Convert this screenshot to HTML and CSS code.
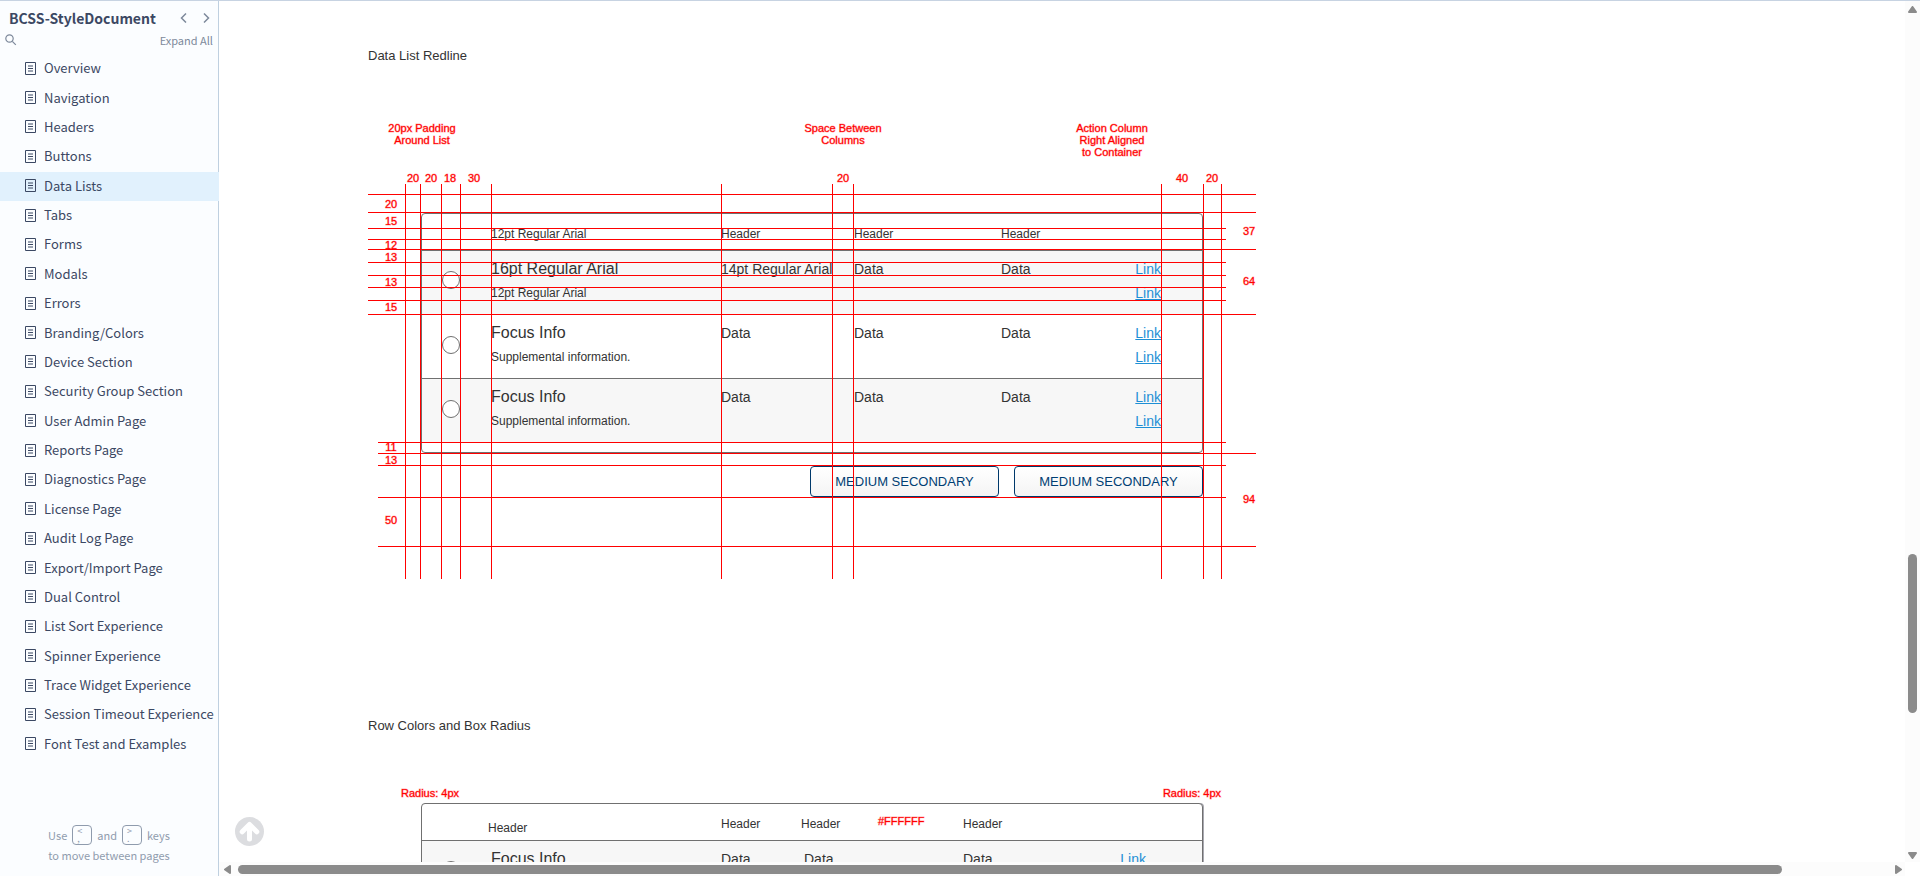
FILE: index.html
```html
<!DOCTYPE html>
<html lang="en">
<head>
<meta charset="utf-8">
<title>BCSS-StyleDocument</title>
<link rel="stylesheet" href="styles.css">
</head>
<body>
<svg class="defs" aria-hidden="true">
  <symbol id="page-icon" viewBox="0 0 12 13"><path d="M.5.5h10v12H.5z" fill="none" stroke="currentColor"/><path d="M3 4h5M3 6.5h5M3 9h5" stroke="currentColor"/></symbol>
</svg>
<div class="app">
  <aside class="sidebar">
    <header class="project">
      <h1 class="project-name">BCSS-StyleDocument</h1>
      <button class="icon-button" aria-label="Previous page"><svg width="8" height="10" viewBox="0 0 8 10"><path d="M6 .5 1.500 5 6 9.500"/></svg></button>
      <button class="icon-button" aria-label="Next page"><svg width="8" height="10" viewBox="0 0 8 10"><path d="M2 .5 6.500 5 2 9.500"/></svg></button>
    </header>
    <div class="tools">
      <button class="icon-button" aria-label="Search"><svg class="search" width="12" height="12" viewBox="0 0 12 12"><circle cx="4.500" cy="4.500" r="3.700"/><path d="m7.300 7.300 3.500 3.500"/></svg></button>
      <button class="expand">Expand All</button>
    </div>
    <nav>
      <ul class="pages">
        <li><a href="#"><svg class="page-icon"><use href="#page-icon"/></svg>Overview</a></li>
        <li><a href="#"><svg class="page-icon"><use href="#page-icon"/></svg>Navigation</a></li>
        <li><a href="#"><svg class="page-icon"><use href="#page-icon"/></svg>Headers</a></li>
        <li><a href="#"><svg class="page-icon"><use href="#page-icon"/></svg>Buttons</a></li>
        <li><a href="#" class="current" aria-current="page"><svg class="page-icon"><use href="#page-icon"/></svg>Data Lists</a></li>
        <li><a href="#"><svg class="page-icon"><use href="#page-icon"/></svg>Tabs</a></li>
        <li><a href="#"><svg class="page-icon"><use href="#page-icon"/></svg>Forms</a></li>
        <li><a href="#"><svg class="page-icon"><use href="#page-icon"/></svg>Modals</a></li>
        <li><a href="#"><svg class="page-icon"><use href="#page-icon"/></svg>Errors</a></li>
        <li><a href="#"><svg class="page-icon"><use href="#page-icon"/></svg>Branding/Colors</a></li>
        <li><a href="#"><svg class="page-icon"><use href="#page-icon"/></svg>Device Section</a></li>
        <li><a href="#"><svg class="page-icon"><use href="#page-icon"/></svg>Security Group Section</a></li>
        <li><a href="#"><svg class="page-icon"><use href="#page-icon"/></svg>User Admin Page</a></li>
        <li><a href="#"><svg class="page-icon"><use href="#page-icon"/></svg>Reports Page</a></li>
        <li><a href="#"><svg class="page-icon"><use href="#page-icon"/></svg>Diagnostics Page</a></li>
        <li><a href="#"><svg class="page-icon"><use href="#page-icon"/></svg>License Page</a></li>
        <li><a href="#"><svg class="page-icon"><use href="#page-icon"/></svg>Audit Log Page</a></li>
        <li><a href="#"><svg class="page-icon"><use href="#page-icon"/></svg>Export/Import Page</a></li>
        <li><a href="#"><svg class="page-icon"><use href="#page-icon"/></svg>Dual Control</a></li>
        <li><a href="#"><svg class="page-icon"><use href="#page-icon"/></svg>List Sort Experience</a></li>
        <li><a href="#"><svg class="page-icon"><use href="#page-icon"/></svg>Spinner Experience</a></li>
        <li><a href="#"><svg class="page-icon"><use href="#page-icon"/></svg>Trace Widget Experience</a></li>
        <li><a href="#"><svg class="page-icon"><use href="#page-icon"/></svg>Session Timeout Experience</a></li>
        <li><a href="#"><svg class="page-icon"><use href="#page-icon"/></svg>Font Test and Examples</a></li>
      </ul>
    </nav>
    <footer class="hint">
      <p class="hint-row">Use <kbd><span>&lt;</span><span>,</span></kbd> and <kbd><span>&gt;</span><span>.</span></kbd> keys</p>
      <p class="hint-row">to move between pages</p>
    </footer>
  </aside>

  <main class="stage">
    <div class="viewport">
      <section class="topic">
        <h2 class="topic-title">Data List Redline</h2>
        <div class="redline">
          <div class="data-list">
            <table>
              <colgroup><col class="c-radio"><col class="c-focus"><col class="c-third"><col class="c-fourth"><col></colgroup>
              <thead>
                <tr><td></td><th>12pt Regular Arial</th><th>Header</th><th>Header</th><th>Header</th><td></td></tr>
              </thead>
              <tbody>
                <tr>
                  <td class="pick"><input type="radio" name="row" aria-label="Row 1"></td>
                  <td><p class="focus">16pt Regular Arial</p><p class="extra">12pt Regular Arial</p></td>
                  <td>14pt Regular Arial</td><td>Data</td><td>Data</td>
                  <td class="actions"><a href="#">Link</a><a href="#">Link</a></td>
                </tr>
                <tr>
                  <td class="pick"><input type="radio" name="row" aria-label="Row 2"></td>
                  <td><p class="focus">Focus Info</p><p class="extra">Supplemental information.</p></td>
                  <td>Data</td><td>Data</td><td>Data</td>
                  <td class="actions"><a href="#">Link</a><a href="#">Link</a></td>
                </tr>
                <tr>
                  <td class="pick"><input type="radio" name="row" aria-label="Row 3"></td>
                  <td><p class="focus">Focus Info</p><p class="extra">Supplemental information.</p></td>
                  <td>Data</td><td>Data</td><td>Data</td>
                  <td class="actions"><a href="#">Link</a><a href="#">Link</a></td>
                </tr>
              </tbody>
            </table>
          </div>
          <div class="buttons">
            <button class="secondary">MEDIUM SECONDARY</button>
            <button class="secondary">MEDIUM SECONDARY</button>
          </div>
          <svg class="guides" width="889" height="480">
            <path d="M37 84h1v395h-1zM52 84h1v395h-1zM73 84h1v395h-1zM92 84h1v395h-1zM123 84h1v395h-1zM353 84h1v395h-1zM464 84h1v395h-1zM485 84h1v395h-1zM793 84h1v395h-1zM835 84h1v395h-1zM853 84h1v395h-1z"/>
            <path d="M0 94h888v1H0zM0 112h888v1H0zM0 128h858v1H0zM0 139h858v1H0zM0 149h888v1H0zM0 162h858v1H0zM0 175h858v1H0zM0 187h858v1H0zM0 200h858v1H0zM0 214h888v1H0z"/>
            <path d="M10 342h848v1H10zM10 353h878v1H10zM10 365h848v1H10zM10 397h848v1H10zM10 446h878v1H10z"/>
            <text><tspan x="54" y="32">20px Padding</tspan><tspan x="54" y="44">Around List</tspan></text>
            <text><tspan x="475" y="32">Space Between</tspan><tspan x="475" y="44">Columns</tspan></text>
            <text><tspan x="744" y="32">Action Column</tspan><tspan x="744" y="44">Right Aligned</tspan><tspan x="744" y="56">to Container</tspan></text>
            <text x="45" y="82">20</text><text x="63" y="82">20</text><text x="82" y="82">18</text><text x="106" y="82">30</text>
            <text x="475" y="82">20</text><text x="814" y="82">40</text><text x="844" y="82">20</text>
            <text x="23" y="108">20</text><text x="23" y="125">15</text><text x="23" y="149">12</text><text x="23" y="161">13</text>
            <text x="23" y="186">13</text><text x="23" y="211">15</text><text x="23" y="351">11</text><text x="23" y="364">13</text><text x="23" y="424">50</text>
            <text x="881" y="135">37</text><text x="881" y="185">64</text><text x="881" y="403">94</text>
          </svg>
        </div>
      </section>

      <section class="topic">
        <h2 class="topic-title">Row Colors and Box Radius</h2>
        <div class="radius-notes"><span>Radius: 4px</span><span>Radius: 4px</span></div>
        <div class="data-list colors">
          <table>
            <colgroup><col class="d-radio"><col class="d-focus"><col class="d-third"><col class="d-fourth"><col class="d-note"><col></colgroup>
            <thead>
              <tr><td></td><th class="low">Header</th><th>Header</th><th>Header</th><th class="swatch">#FFFFFF</th><th>Header</th><td></td></tr>
            </thead>
            <tbody>
              <tr>
                <td class="pick"><input type="radio" name="color-row" aria-label="Row 1"></td>
                <td class="inset"><p class="focus">Focus Info</p><p class="extra">Supplemental information.</p></td>
                <td>Data</td><td class="inset">Data</td><td></td><td>Data</td>
                <td class="actions"><a href="#">Link</a><a href="#">Link</a></td>
              </tr>
            </tbody>
          </table>
        </div>
      </section>
      <button class="to-top" aria-label="Back to top"><svg width="29" height="29" viewBox="0 0 29 29"><circle cx="14.500" cy="14.500" r="14.500" fill="#dcdde0"/><path d="M14.500 22V8.500M7.200 14.800l7.300-7.300 7.300 7.300" fill="none" stroke="#fff" stroke-width="5" stroke-linecap="round" stroke-linejoin="round"/></svg></button>
    </div>
    <div class="scroll scroll-y">
      <svg width="9" height="7" viewBox="0 0 9 7"><path d="M4.500 1 8 6H1z"/></svg>
      <span class="gap-before-y"></span><span class="thumb thumb-y"></span><span class="fill"></span>
      <svg width="9" height="7" viewBox="0 0 9 7"><path d="M4.500 6 8 1H1z"/></svg>
    </div>
    <div class="scroll scroll-x">
      <svg width="7" height="9" viewBox="0 0 7 9"><path d="M1 4.500 6 8V1z"/></svg>
      <span class="thumb thumb-x"></span><span class="gap-after-x"></span>
      <svg width="7" height="9" viewBox="0 0 7 9"><path d="M6 4.500 1 8V1z"/></svg>
    </div>
  </main>
</div>
</body>
</html>
```
FILE: styles.css
```css
* { box-sizing: border-box; }
body { margin: 0; color: #333; background: #fff; font-family: "Liberation Sans", Arial, sans-serif; }
h1, h2, p, ul { margin: 0; padding: 0; }
button { padding: 0; border: 0; background: none; font: inherit; color: inherit; }
svg { display: block; flex: none; }
.defs { position: absolute; width: 0; height: 0; }

.app { display: flex; height: 100vh; border-top: 1px solid #c7d3e2; }

/* Sidebar */
.sidebar {
  display: flex; flex-direction: column; flex: none; width: 219px;
  border-right: 1px solid #bfd0e0; background: #fbfdff; color: #3b4863;
  font-family: "Noto Sans CJK SC", "Open Sans", sans-serif; font-size: 13px; line-height: 20px;
}
.project { display: flex; align-items: center; gap: 14px; height: 29px; padding: 5px 8px 0 9px; }
.project-name { flex: 1; font-size: 14px; line-height: 20px; font-weight: 700; white-space: nowrap; }
.icon-button svg { fill: none; stroke: #7d899b; stroke-width: 1.500; }
.icon-button .search { stroke-width: 1.200; }
.tools { display: flex; justify-content: space-between; align-items: center; height: 20px; margin-bottom: 4px; padding: 0 5px; color: #7d899b; }
.expand { font-size: 11px; line-height: 20px; }
.pages { display: grid; grid-template-columns: minmax(0, 1fr); grid-auto-rows: 1fr; height: 705px; list-style: none; }
.pages a { display: flex; align-items: center; gap: 7px; height: 100%; padding: 0 0 1px 25px; color: inherit; text-decoration: none; white-space: nowrap; }
.pages .current { margin-right: -1px; background: #e1f1fd; }
.page-icon { width: 12px; height: 13px; }
.hint { margin-top: auto; padding-bottom: 11px; color: #8f9bad; font-size: 11px; }
.hint-row { display: flex; justify-content: center; align-items: center; gap: 5px; line-height: 20px; }
.hint kbd {
  display: flex; flex-direction: column; width: 20px; height: 20px; padding: 1px 0 0 4px;
  border: 1px solid #8f9bad; border-radius: 4px; font: inherit; font-size: 9px; line-height: 8px;
}

/* Page viewport with its scrollbars */
.stage { display: grid; flex: 1; min-width: 0; grid-template: minmax(0, 1fr) 14px / minmax(0, 1fr) 15px; }
.viewport { position: relative; overflow: hidden; }
.scroll { display: flex; align-items: center; background: #fcfcfc; }
.scroll svg { fill: #8b8b8b; stroke: #8b8b8b; stroke-width: 2; stroke-linejoin: round; }
.thumb { border-radius: 5px; background: #8b8b8b; }
.scroll-y { flex-direction: column; padding: 5px 0 3px; }
.gap-before-y { flex: 540; }
.thumb-y { flex: 159; width: 9px; }
.fill { flex: 139; }
.scroll-x { padding: 0 3px 0 5px; }
.thumb-x { flex: 1542; height: 9px; margin-left: 7px; }
.gap-after-x { flex: 113; }
.to-top { position: absolute; left: 16px; bottom: 16px; }

/* Topics */
.topic { padding: 45px 0 91px 149px; }
.topic + .topic { padding-bottom: 0; }
.topic-title { font-size: 13px; line-height: 20px; font-weight: 400; }
.redline { position: relative; width: 889px; padding: 147px 54px 83px 53px; }
.guides { position: absolute; top: 34px; left: 0; fill: #f00; font-size: 11px; text-anchor: middle; pointer-events: none; }
.guides text { stroke: rgb(255 0 0 / 35%); stroke-width: 1; }

.data-list { width: 782px; padding-bottom: 9px; border: 1px solid #707070; border-radius: 4px; background: #fff; }
.data-list table { width: 100%; table-layout: fixed; border-spacing: 0; }
.data-list th { padding: 12px 0 8px; border-bottom: 1px solid #707070; font-size: 12px; line-height: 16px; font-weight: 400; text-align: left; vertical-align: top; }
.data-list thead td { height: 37px; padding: 0; border-bottom: 1px solid #707070; }
.data-list tbody td { height: 64px; padding: 6px 0 0; border-bottom: 1px solid #707070; font-size: 14px; line-height: 24px; vertical-align: top; }
.data-list tbody tr:last-child td { border-bottom: 0; }
.data-list tbody tr:nth-child(odd) { background: #f7f7f7; }
.data-list tbody .pick { padding: 20px 0 0 20px; line-height: 0; }
.data-list tbody tr + tr .pick { padding-top: 21px; }
.pick input { appearance: none; width: 18px; height: 18px; margin: 0; border: 1px solid #707070; border-radius: 50%; background: #fff; }
.focus { font-size: 16px; }
.extra { font-size: 12px; }
.data-list tbody .actions { padding-right: 41px; }
.actions a { display: block; color: #1e8fd5; text-align: right; }
.c-radio { width: 69px; }
.c-focus { width: 230px; }
.c-third { width: 133px; }
.c-fourth { width: 147px; }

.buttons { display: flex; justify-content: flex-end; gap: 15px; padding-top: 13px; }
.secondary { width: 189px; height: 31px; border: 1px solid #00396b; border-radius: 4px; background: linear-gradient(#fff, #f4f4f4); color: #003e73; font-size: 13px; }

.radius-notes { display: flex; justify-content: space-between; width: 820px; margin: 51px 0 4px 33px; color: #f00; font-size: 11px; line-height: 12px; }
.radius-notes, .swatch { -webkit-text-stroke: 1px rgb(255 0 0 / 35%); }
.colors { margin-left: 53px; box-shadow: 1px 0 0 #a8a8b0; }
.data-list .low { padding: 16px 0 4px; }
.data-list .swatch { padding: 9px 0 11px; color: #f00; font-size: 11px; }
.data-list tbody .inset { padding-left: 3px; }
.data-list.colors tbody .actions { padding-right: 56px; }
.d-radio { width: 66px; }
.d-focus { width: 233px; }
.d-third { width: 80px; }
.d-fourth { width: 77px; }
.d-note { width: 85px; }
```
